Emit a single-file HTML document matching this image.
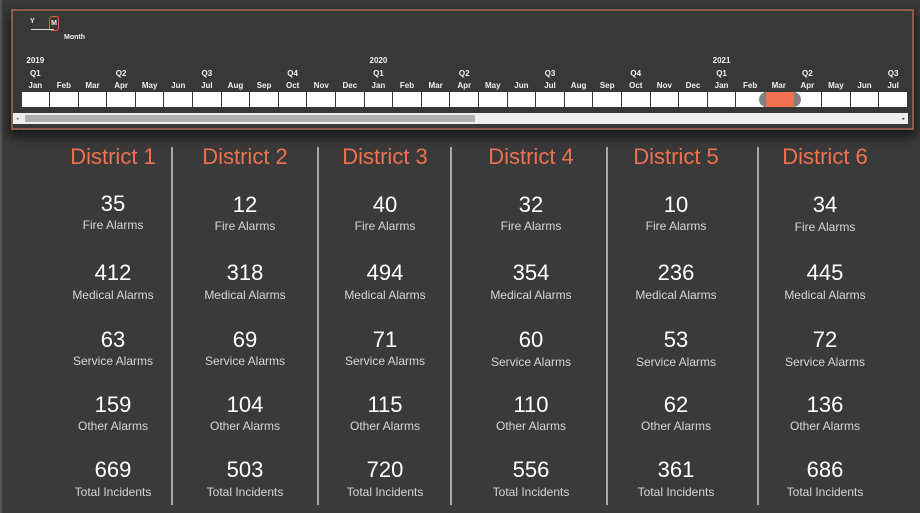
<!DOCTYPE html>
<html><head><meta charset="utf-8"><style>
html,body{margin:0;padding:0;}
body{width:920px;height:513px;background:#3a3a3a;position:relative;overflow:hidden;font-family:"Liberation Sans",Arial,sans-serif;}
.panel{position:absolute;left:11px;top:9px;width:899px;height:117px;border:2px solid #8c5a4c;background:#383838;box-shadow:0 5px 10px 2px rgba(0,0,0,0.6);}
.cols{position:absolute;left:21px;top:55px;width:887px;display:flex;}
.col{width:28.6px;flex:none;text-align:center;color:#f0f0f0;font-size:8px;font-weight:bold;position:relative;}
.col div{height:12.5px;line-height:12px;}
.col .c{position:absolute;top:37px;left:0.5px;width:27.6px;height:15px;background:#fff;}
.scroll{position:absolute;left:13px;top:113px;width:895px;height:11px;background:#eee;}
.thumb{position:absolute;left:12px;top:2px;width:450px;height:7px;background:#b0b0b0;}
.dcol{position:absolute;top:0;text-align:center;width:150px;}
.t{position:absolute;top:144px;width:150px;color:#f0714f;font-size:22px;}
.n{position:absolute;width:150px;color:#fff;font-size:22px;}
.l{position:absolute;width:150px;color:#d6d6d6;font-size:12px;}
.div{position:absolute;top:147px;width:2px;height:358px;background:#a8a8a8;}
</style></head><body>
<div style="position:absolute;left:0;top:0;width:2px;height:513px;background:#555"></div>
<div class="panel"></div>
<div style="position:absolute;left:30px;top:18px;color:#eee;font-size:7px;font-weight:bold">Y</div>
<div style="position:absolute;left:49px;top:16px;width:10px;height:15px;border:1.5px solid #e0603c;border-radius:3px;color:#eee;font-size:7px;font-weight:bold;text-align:center;line-height:13px;box-sizing:border-box">M</div>
<div style="position:absolute;left:31px;top:29px;width:23px;height:1px;background:#ddd"></div>
<div style="position:absolute;left:64px;top:34px;color:#eee;font-size:7px;font-weight:bold">Month</div>
<div class="cols">
<div class="col"><div>2019</div><div>Q1</div><div>Jan</div><span class="c"></span></div>
<div class="col"><div></div><div></div><div>Feb</div><span class="c"></span></div>
<div class="col"><div></div><div></div><div>Mar</div><span class="c"></span></div>
<div class="col"><div></div><div>Q2</div><div>Apr</div><span class="c"></span></div>
<div class="col"><div></div><div></div><div>May</div><span class="c"></span></div>
<div class="col"><div></div><div></div><div>Jun</div><span class="c"></span></div>
<div class="col"><div></div><div>Q3</div><div>Jul</div><span class="c"></span></div>
<div class="col"><div></div><div></div><div>Aug</div><span class="c"></span></div>
<div class="col"><div></div><div></div><div>Sep</div><span class="c"></span></div>
<div class="col"><div></div><div>Q4</div><div>Oct</div><span class="c"></span></div>
<div class="col"><div></div><div></div><div>Nov</div><span class="c"></span></div>
<div class="col"><div></div><div></div><div>Dec</div><span class="c"></span></div>
<div class="col"><div>2020</div><div>Q1</div><div>Jan</div><span class="c"></span></div>
<div class="col"><div></div><div></div><div>Feb</div><span class="c"></span></div>
<div class="col"><div></div><div></div><div>Mar</div><span class="c"></span></div>
<div class="col"><div></div><div>Q2</div><div>Apr</div><span class="c"></span></div>
<div class="col"><div></div><div></div><div>May</div><span class="c"></span></div>
<div class="col"><div></div><div></div><div>Jun</div><span class="c"></span></div>
<div class="col"><div></div><div>Q3</div><div>Jul</div><span class="c"></span></div>
<div class="col"><div></div><div></div><div>Aug</div><span class="c"></span></div>
<div class="col"><div></div><div></div><div>Sep</div><span class="c"></span></div>
<div class="col"><div></div><div>Q4</div><div>Oct</div><span class="c"></span></div>
<div class="col"><div></div><div></div><div>Nov</div><span class="c"></span></div>
<div class="col"><div></div><div></div><div>Dec</div><span class="c"></span></div>
<div class="col"><div>2021</div><div>Q1</div><div>Jan</div><span class="c"></span></div>
<div class="col"><div></div><div></div><div>Feb</div><span class="c"></span></div>
<div class="col"><div></div><div></div><div>Mar</div><span class="c"></span></div>
<div class="col"><div></div><div>Q2</div><div>Apr</div><span class="c"></span></div>
<div class="col"><div></div><div></div><div>May</div><span class="c"></span></div>
<div class="col"><div></div><div></div><div>Jun</div><span class="c"></span></div>
<div class="col"><div></div><div>Q3</div><div>Jul</div><span class="c"></span></div>
</div>
<div style="position:absolute;left:759px;top:92px;width:42px;height:15px;border-radius:8px;background:#808080"></div>
<div style="position:absolute;left:766px;top:92px;width:28px;height:15px;background:#f0714f"></div>
<div class="scroll"><div class="thumb"></div>
<div style="position:absolute;left:3px;top:3px;font-size:5px;color:#777">◂</div>
<div style="position:absolute;right:3px;top:3px;font-size:5px;color:#333">▸</div></div>

<div class="div" style="left:171px"></div>
<div class="div" style="left:317px"></div>
<div class="div" style="left:450px"></div>
<div class="div" style="left:606px"></div>
<div class="div" style="left:757px"></div>

<div class="dcol" style="left:38px">
<div class="t">District 1</div>
<div class="n" style="top:191px">35</div><div class="l" style="top:218px">Fire Alarms</div>
<div class="n" style="top:260px">412</div><div class="l" style="top:288px">Medical Alarms</div>
<div class="n" style="top:327px">63</div><div class="l" style="top:354px">Service Alarms</div>
<div class="n" style="top:392px">159</div><div class="l" style="top:419px">Other Alarms</div>
<div class="n" style="top:457px">669</div><div class="l" style="top:485px">Total Incidents</div>
</div>
<div class="dcol" style="left:170px">
<div class="t">District 2</div>
<div class="n" style="top:192px">12</div><div class="l" style="top:219px">Fire Alarms</div>
<div class="n" style="top:260px">318</div><div class="l" style="top:288px">Medical Alarms</div>
<div class="n" style="top:327px">69</div><div class="l" style="top:354px">Service Alarms</div>
<div class="n" style="top:392px">104</div><div class="l" style="top:419px">Other Alarms</div>
<div class="n" style="top:457px">503</div><div class="l" style="top:485px">Total Incidents</div>
</div>
<div class="dcol" style="left:310px">
<div class="t">District 3</div>
<div class="n" style="top:192px">40</div><div class="l" style="top:219px">Fire Alarms</div>
<div class="n" style="top:260px">494</div><div class="l" style="top:288px">Medical Alarms</div>
<div class="n" style="top:327px">71</div><div class="l" style="top:354px">Service Alarms</div>
<div class="n" style="top:392px">115</div><div class="l" style="top:419px">Other Alarms</div>
<div class="n" style="top:457px">720</div><div class="l" style="top:485px">Total Incidents</div>
</div>
<div class="dcol" style="left:456px">
<div class="t">District 4</div>
<div class="n" style="top:192px">32</div><div class="l" style="top:219px">Fire Alarms</div>
<div class="n" style="top:260px">354</div><div class="l" style="top:288px">Medical Alarms</div>
<div class="n" style="top:327px">60</div><div class="l" style="top:355px">Service Alarms</div>
<div class="n" style="top:392px">110</div><div class="l" style="top:419px">Other Alarms</div>
<div class="n" style="top:457px">556</div><div class="l" style="top:485px">Total Incidents</div>
</div>
<div class="dcol" style="left:601px">
<div class="t">District 5</div>
<div class="n" style="top:192px">10</div><div class="l" style="top:219px">Fire Alarms</div>
<div class="n" style="top:260px">236</div><div class="l" style="top:288px">Medical Alarms</div>
<div class="n" style="top:327px">53</div><div class="l" style="top:355px">Service Alarms</div>
<div class="n" style="top:392px">62</div><div class="l" style="top:419px">Other Alarms</div>
<div class="n" style="top:457px">361</div><div class="l" style="top:485px">Total Incidents</div>
</div>
<div class="dcol" style="left:750px">
<div class="t">District 6</div>
<div class="n" style="top:192px">34</div><div class="l" style="top:220px">Fire Alarms</div>
<div class="n" style="top:260px">445</div><div class="l" style="top:288px">Medical Alarms</div>
<div class="n" style="top:327px">72</div><div class="l" style="top:355px">Service Alarms</div>
<div class="n" style="top:392px">136</div><div class="l" style="top:419px">Other Alarms</div>
<div class="n" style="top:457px">686</div><div class="l" style="top:485px">Total Incidents</div>
</div>
</body></html>
